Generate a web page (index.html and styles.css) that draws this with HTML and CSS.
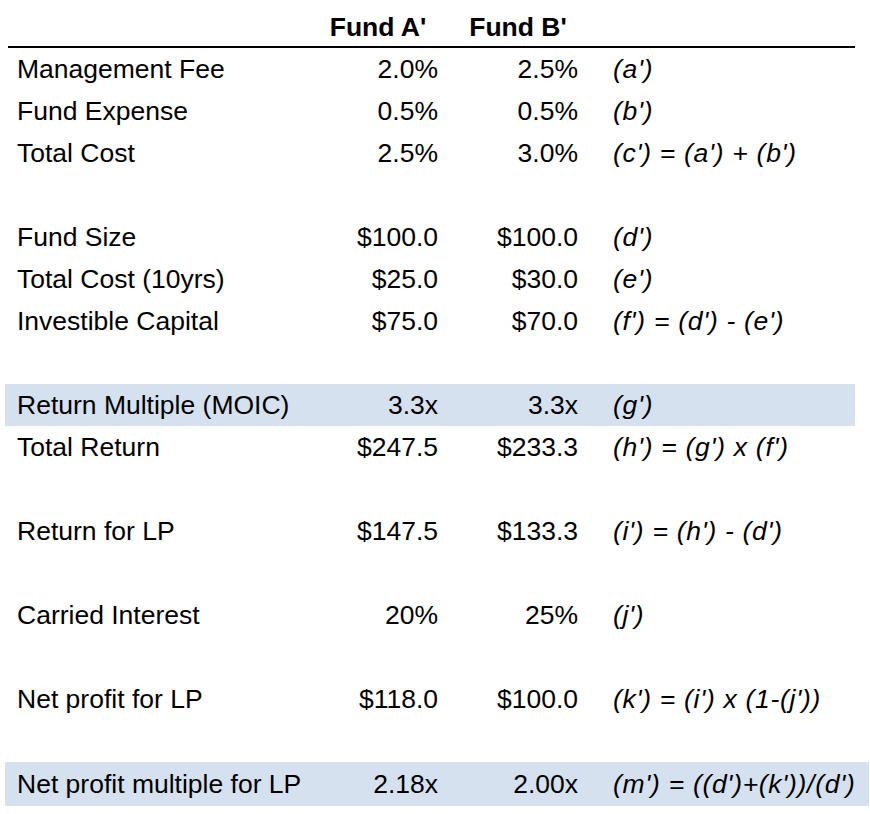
FILE: index.html
```html
<!DOCTYPE html>
<html lang="en">
<head>
<meta charset="utf-8">
<title>Fund comparison</title>
<link rel="stylesheet" href="styles.css">
</head>
<body>
<div class="sheet">
  <div class="row head">
    <div class="label"></div>
    <div class="hcol">Fund A'</div>
    <div class="hcol">Fund B'</div>
    <div class="note"></div>
  </div>
  <div class="row"><div class="label">Management Fee</div><div class="num">2.0%</div><div class="num">2.5%</div><div class="note">(a')</div></div>
  <div class="row"><div class="label">Fund Expense</div><div class="num">0.5%</div><div class="num">0.5%</div><div class="note">(b')</div></div>
  <div class="row"><div class="label">Total Cost</div><div class="num">2.5%</div><div class="num">3.0%</div><div class="note">(c') = (a') + (b')</div></div>
  <div class="row"></div>
  <div class="row"><div class="label">Fund Size</div><div class="num">$100.0</div><div class="num">$100.0</div><div class="note">(d')</div></div>
  <div class="row"><div class="label">Total Cost (10yrs)</div><div class="num">$25.0</div><div class="num">$30.0</div><div class="note">(e')</div></div>
  <div class="row"><div class="label">Investible Capital</div><div class="num">$75.0</div><div class="num">$70.0</div><div class="note">(f') = (d') - (e')</div></div>
  <div class="row"></div>
  <div class="row band"><div class="label">Return Multiple (MOIC)</div><div class="num">3.3x</div><div class="num">3.3x</div><div class="note">(g')</div></div>
  <div class="row"><div class="label">Total Return</div><div class="num">$247.5</div><div class="num">$233.3</div><div class="note">(h') = (g') x (f')</div></div>
  <div class="row"></div>
  <div class="row"><div class="label">Return for LP</div><div class="num">$147.5</div><div class="num">$133.3</div><div class="note">(i') = (h') - (d')</div></div>
  <div class="row"></div>
  <div class="row"><div class="label">Carried Interest</div><div class="num">20%</div><div class="num">25%</div><div class="note">(j')</div></div>
  <div class="row"></div>
  <div class="row"><div class="label">Net profit for LP</div><div class="num">$118.0</div><div class="num">$100.0</div><div class="note">(k') = (i') x (1-(j'))</div></div>
  <div class="row"></div>
  <div class="row band wide"><div class="label">Net profit multiple for LP</div><div class="num">2.18x</div><div class="num">2.00x</div><div class="note">(m') = ((d')+(k'))/(d')</div></div>
</div>
</body>
</html>
```
FILE: styles.css
```css
html, body {
  margin: 0;
  padding: 0;
  background: #ffffff;
}

body {
  font-family: "Liberation Sans", Arial, sans-serif;
  font-size: 26.5px;
  color: #000000;
}

.sheet {
  width: 847px;
  margin-left: 8px;
}

.row {
  display: grid;
  grid-template-columns: 300px 140px 140px 1fr;
  height: 42px;
  line-height: 42px;
  white-space: nowrap;
}

.head {
  height: 48px;
  line-height: 38px;
  padding-top: 8px;
  box-sizing: border-box;
  border-bottom: 2px solid #000000;
}

.hcol {
  font-weight: bold;
  text-align: center;
}

.label {
  padding-left: 9px;
}

.num {
  text-align: right;
  padding-right: 10px;
}

.note {
  font-style: italic;
  padding-left: 25px;
  letter-spacing: 0.7px;
}

.band {
  background: #d5e1ef;
  margin-left: -3px;
  padding-left: 3px;
}

.wide {
  width: 861px;
  height: 44px;
  line-height: 44px;
}
```
